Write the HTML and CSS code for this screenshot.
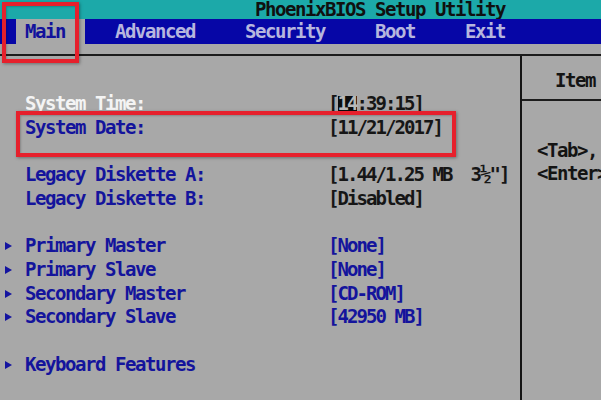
FILE: index.html
```html
<!DOCTYPE html>
<html>
<head>
<meta charset="utf-8">
<link rel="stylesheet" href="styles.css">
</head>
<body>
<div class="screen">
  <div class="titlebar">PhoenixBIOS Setup Utility</div>
  <div class="menubar">
    <span class="tab active">Main</span>
    <span class="tab">Advanced</span>
    <span class="tab">Security</span>
    <span class="tab">Boot</span>
    <span class="tab">Exit</span>
  </div>
  <div class="gap"></div>
  <div class="body">
    <div class="left">
      <div class="row"><span class="arrow-cell"></span><span class="label white">System Time:</span><span class="value">[<span class="hl">14</span>:39:15]</span></div>
      <div class="row"><span class="arrow-cell"></span><span class="label">System Date:</span><span class="value">[11/21/2017]</span></div>
      <div class="row"></div>
      <div class="row"><span class="arrow-cell"></span><span class="label">Legacy Diskette A:</span><span class="value">[1.44/1.25 MB  3½"]</span></div>
      <div class="row"><span class="arrow-cell"></span><span class="label">Legacy Diskette B:</span><span class="value">[Disabled]</span></div>
      <div class="row"></div>
      <div class="row"><span class="arrow-cell"><i class="arrow"></i></span><span class="label">Primary Master</span><span class="value blue">[None]</span></div>
      <div class="row"><span class="arrow-cell"><i class="arrow"></i></span><span class="label">Primary Slave</span><span class="value blue">[None]</span></div>
      <div class="row"><span class="arrow-cell"><i class="arrow"></i></span><span class="label">Secondary Master</span><span class="value blue">[CD-ROM]</span></div>
      <div class="row"><span class="arrow-cell"><i class="arrow"></i></span><span class="label">Secondary Slave</span><span class="value blue">[42950 MB]</span></div>
      <div class="row"></div>
      <div class="row"><span class="arrow-cell"><i class="arrow"></i></span><span class="label">Keyboard Features</span></div>
    </div>
    <div class="right">
      <div class="help-head">Item</div>
      <div class="help">
        <div class="hrow">&lt;Tab&gt;,</div>
        <div class="hrow">&lt;Enter&gt;</div>
      </div>
    </div>
  </div>
  <div class="mark mark-main"></div>
  <div class="mark mark-date"></div>
</div>
</body>
</html>
```

FILE: styles.css
```css
* { box-sizing: border-box; }
html, body { margin: 0; padding: 0; }
body {
  width: 601px;
  height: 400px;
  overflow: hidden;
  background: #a8a8a8;
  font-family: "DejaVu Sans Mono", "Liberation Mono", monospace;
  font-size: 19px;
  font-weight: bold;
  letter-spacing: -1.44px;
  color: #141414;
}
.screen {
  position: relative;
  width: 601px;
  height: 400px;
  background: #a8a8a8;
  display: flex;
  flex-direction: column;
}
.titlebar {
  height: 19px;
  line-height: 19px;
  background: #1ca9a9;
  color: #101010;
  padding-left: 255px;
  white-space: pre;
  overflow: hidden;
}
.menubar {
  height: 25px;
  line-height: 25px;
  background: #0606a6;
  display: flex;
  padding-left: 16px;
  color: #b6b6de;
  white-space: pre;
}
.tab {
  padding: 0 20px 0 30px;
}
.tab.active {
  background: #a8a8a8;
  color: #12129c;
  padding: 0 20px 0 9px;
}
.gap {
  height: 12px;
  border-bottom: 2px solid #1c1c1c;
}
.body {
  flex: 1;
  display: flex;
  min-height: 0;
}
.left {
  flex: 0 0 522px;
  width: 522px;
  padding-top: 36px;
  border-right: 2px solid #141414;
}
.row {
  height: 23.73px;
  line-height: 23.73px;
  display: flex;
  white-space: pre;
}
.arrow-cell {
  width: 25px;
  display: flex;
  align-items: center;
  padding-left: 5px;
}
.arrow {
  display: block;
  width: 0;
  height: 0;
  border-left: 7px solid #1414a0;
  border-top: 4.5px solid transparent;
  border-bottom: 4.5px solid transparent;
}
.label {
  width: 303px;
  color: #14149c;
}
.label.white { color: #f4f4f4; }
.value {
  letter-spacing: -1.94px;
  color: #161616;
}
.value.blue { color: #14149c; }
.hl {
  display: inline-block;
  line-height: 15px;
  background: #0c0c0c;
  color: #b8b8b8;
}
.right {
  flex: 1 1 auto;
  min-width: 0;
  overflow: hidden;
  display: flex;
  flex-direction: column;
}
.help-head {
  height: 45px;
  padding: 13px 0 0 33px;
  line-height: 23.73px;
  border-bottom: 2px solid #1c1c1c;
  white-space: pre;
}
.help {
  padding: 37.5px 0 0 15px;
}
.hrow {
  height: 23.73px;
  line-height: 23.73px;
  white-space: pre;
}
.mark {
  position: absolute;
  border: 4px solid #e6202c;
  box-shadow: 1px 1px 3px rgba(0,0,0,0.35), inset 1px 1px 2px rgba(0,0,0,0.2);
}
.mark-main {
  left: 2px;
  top: 2px;
  width: 77px;
  height: 61px;
}
.mark-date {
  left: 16px;
  top: 111px;
  width: 440px;
  height: 46px;
}
```
